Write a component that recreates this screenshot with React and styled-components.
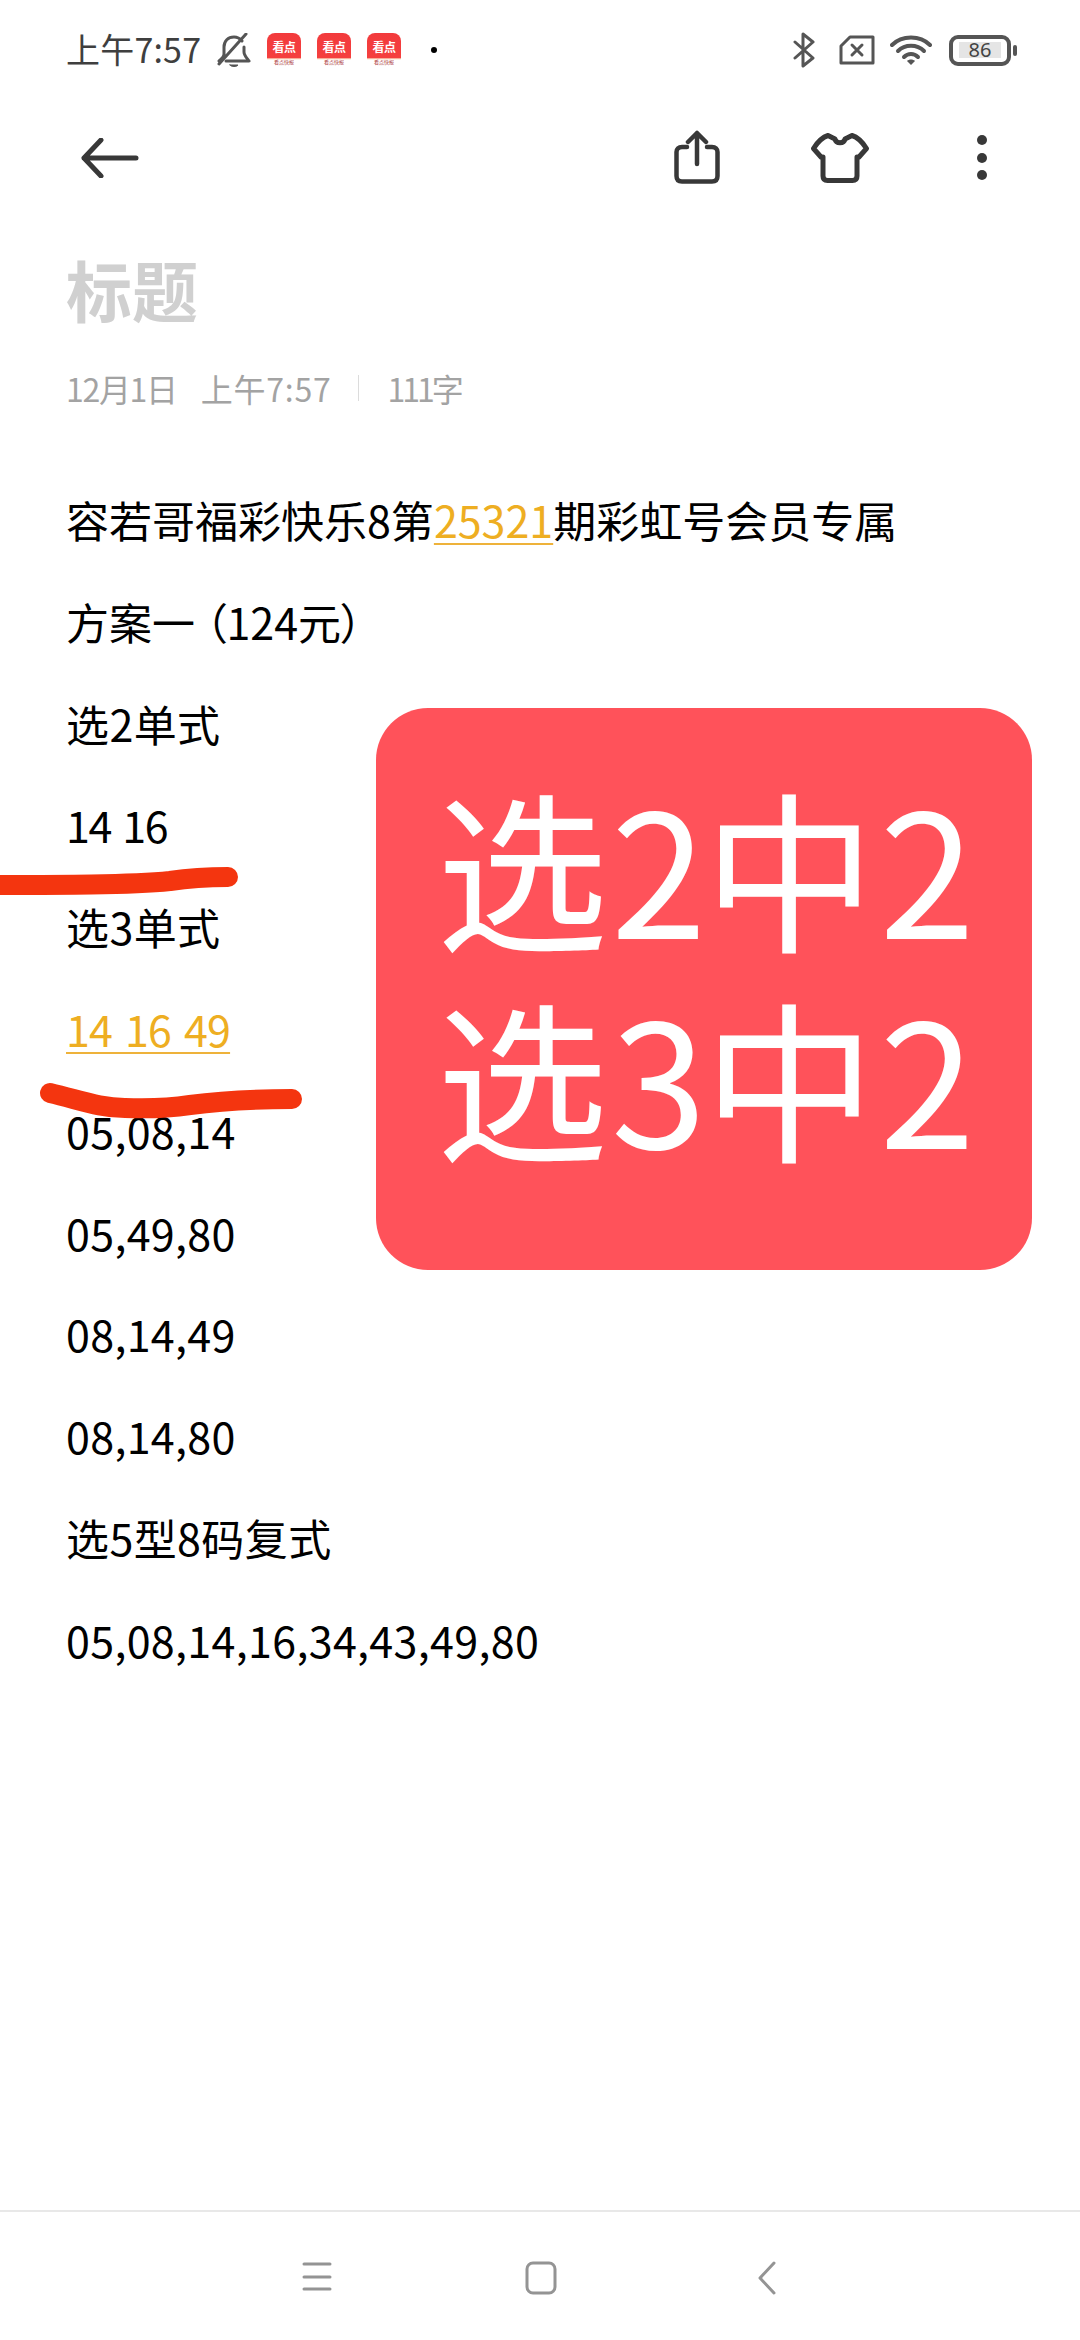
import React from "react";
import styled, { createGlobalStyle } from "styled-components";

const Global = createGlobalStyle`
  html, body { margin: 0; padding: 0; background: #fff; }
  * { box-sizing: border-box; }
`;
const FONT = `"Noto Sans CJK SC", "Noto Sans", sans-serif`;

const Page = styled.div`
  position: relative; width: 1080px; height: 2340px; overflow: hidden;
  display: flex; flex-direction: column; background: #fff; font-family: ${FONT}; color: #000;
`;
const StatusBar = styled.div`
  height: 100px; padding: 0 63px 0 66px; display: flex; align-items: center; color: #444;
`;
const Clock = styled.span`font-size: 34px; line-height: 40px; width: 151px; margin-top: -2px; letter-spacing: 0.2px; color: #3f3f3f;`;
const StatusLeft = styled.div`display: flex; align-items: center; flex: 1;`;
const StatusRight = styled.div`display: flex; align-items: center;`;
const StatusIcon = styled.div`display: flex; margin-left: ${p => p.$ml}px;`;
const AppBadge = styled.div`
  width: 34px; height: 34px; margin-left: ${p => p.$ml || 16}px; border-radius: 8px; overflow: hidden;
  display: flex; flex-direction: column; align-items: center; justify-content: flex-start;
  background: linear-gradient(#f23a3c 0, #f5403f 73%, #fbe3c8 76%, #fff 80%);
`;
const BadgeText = styled.span`font-size: 12px; line-height: 14px; margin-top: 7px; font-weight: 700; color: #fff; letter-spacing: -0.5px; white-space: nowrap;`;
const BadgeSub = styled.span`font-size: 5px; line-height: 6px; margin-top: 5px; color: #a33; white-space: nowrap;`;
const Dot = styled.i`width: 6px; height: 6px; border-radius: 50%; background: #000; margin-left: 30px;`;
const Toolbar = styled.div`
  height: 115px; padding: 0 92px 0 81px; display: flex; align-items: center; justify-content: space-between;
`;
const ToolRight = styled.div`display: flex; align-items: center;`;
const Title = styled.h1`
  margin: 28px 0 0 66px; font-size: 66px; line-height: 90px; font-weight: 700; color: #d0d0d0;
`;
const Meta = styled.div`
  margin: 33px 0 0 66px; height: 44px; display: flex; align-items: center; font-size: 32px; color: #a3a3a3; white-space: pre;
`;
const MetaText = styled.span`letter-spacing: ${p => p.$ls}px; margin-left: ${p => p.$ml || 0}px;`;
const Divider = styled.i`width: 1px; height: 26px; background: #dcdcdc; margin: 0 28px 0 27px;`;
const Body = styled.div`margin: 59px 0 0 66px; display: flex; flex-direction: column;`;
const Line = styled.div`
  font-size: 43px; line-height: 101.8px; height: 101.8px; white-space: pre;
  letter-spacing: ${p => p.$ls || 0}px; word-spacing: ${p => p.$ws || 0}px;
`;
const Mark = styled.span`color: #eeae22; text-decoration: underline; text-decoration-thickness: 2px; text-underline-offset: 5px; text-decoration-color: #eeb23a;`;
const Paren = styled.span`font-feature-settings: "palt"; margin: 0 ${p => p.$mr || 0}px 0 ${p => p.$ml || 0}px;`;
const Sticker = styled.div`
  position: absolute; left: 376px; top: 708px; width: 656px; height: 562px; border-radius: 52px;
  background: #ff525a; color: #fff; display: flex; flex-direction: column; align-items: center; justify-content: center;
  padding: 0 0 40px 3px; font-size: 172px; line-height: 210px; white-space: nowrap;
`;
const StickerDigit = styled.span`margin: 0 ${p => p.$mr || 0}px 0 ${p => p.$ml || 0}px;`;
const Scribble = styled.svg`position: absolute; left: 0; top: 0; pointer-events: none;`;
const NavBar = styled.div`
  margin-top: auto; height: 130px; border-top: 2px solid #e8e8e8; padding: 49px 0 0 302px; display: flex; align-items: flex-start;
`;
const NavSlot = styled.div`width: ${p => p.$w}px; display: flex;`;

const Bell = () => (
  <svg width="34" height="34" viewBox="0 0 34 34" fill="none" stroke="#555" strokeWidth="3" strokeLinecap="round" strokeLinejoin="round">
    <path d="M7 21V14C7 8 11 4 17 4C20 4 23 5.500 25 8M27 14V19C27 23 31 26 32 28H9" />
    <path d="M2 31L29 1M2 28C4 26 6 25 7 22" />
    <path d="M13 32H21C20 34 14 34 13 32Z" fill="#555" strokeWidth="1" />
  </svg>
);
const Bluetooth = () => (
  <svg width="22" height="36" viewBox="0 0 22 36" fill="none" stroke="#555" strokeWidth="3" strokeLinecap="round" strokeLinejoin="round">
    <path d="M2 10L20 26L10 34V2L20 10L2 26" />
  </svg>
);
const Sim = () => (
  <svg width="36" height="30" viewBox="0 0 36 30" fill="none" stroke="#555" strokeWidth="3" strokeLinejoin="round" strokeLinecap="round">
    <path d="M11 2H34V28H2V11Z" />
    <path d="M13 10L23 20M23 10L13 20" />
  </svg>
);
const Wifi = () => (
  <svg width="42" height="32" viewBox="0 0 42 32" fill="none" stroke="#555" strokeWidth="4" strokeLinecap="round">
    <path d="M2 11C12 1 30 1 40 11" />
    <path d="M8 17C15 10 27 10 34 17" />
    <path d="M14 23C18 19 24 19 28 23" />
    <path d="M21 31L17 27C19 25 23 25 25 27Z" fill="#555" stroke="none" />
  </svg>
);
const BatteryShell = styled.div`position: relative; width: 62px; height: 31px; border: 4px solid #555; border-radius: 9px; display: flex; align-items: center; justify-content: center; padding: 0 5px;`;
const BatteryFill = styled.div`width: 42px; height: 16px; background: #e5e5e5; font-size: 20px; line-height: 16px; text-align: center; color: #444; font-family: "Noto Sans", sans-serif;`;
const BatteryNub = styled.i`width: 4px; height: 11px; background: #555; border-radius: 2px; margin-left: 2px;`;
const BatteryWrap = styled.div`display: flex; align-items: center; margin-left: 17px;`;

const Back = () => (
  <svg width="58" height="40" viewBox="0 0 58 40" fill="none" stroke="#383838" strokeWidth="5" strokeLinecap="round" strokeLinejoin="round">
    <path d="M20 2L3 20L20 38M3 20H55" />
  </svg>
);
const Share = () => (
  <svg width="46" height="54" viewBox="0 0 46 54" fill="none" stroke="#383838" strokeWidth="4.500" strokeLinecap="round" strokeLinejoin="round">
    <path d="M13 17H8C4.500 17 2.500 19 2.500 22V46C2.500 49.500 4.500 51.500 8 51.500H38C41.500 51.500 43.500 49.500 43.500 46V22C43.500 19 41.500 17 38 17H33" />
    <path d="M23 34V3M14 12L23 3L32 12" />
  </svg>
);
const Shirt = () => (
  <svg width="58" height="50" viewBox="0 0 58 50" fill="none" stroke="#383838" strokeWidth="5" strokeLinecap="round" strokeLinejoin="round">
    <path d="M17 2.500L24 6C25 11 33 11 34 6L41 2.500C46 4 52 10 55.500 15.500L48 24H46V43C46 46 44.500 47.500 41.500 47.500H16.500C13.500 47.500 12 46 12 43V24H10L2.500 15.500C6 10 12 4 17 2.500Z" />
  </svg>
);
const ShareSlot = styled.div`width: 137px; display: flex; margin-top: -2px;`;
const ShirtSlot = styled.div`width: 165px; display: flex;`;
const Kebab = () => (
  <svg width="12" height="48" viewBox="0 0 12 48" fill="#383838">
    <circle cx="6" cy="6" r="5" /><circle cx="6" cy="24" r="5" /><circle cx="6" cy="41" r="5" />
  </svg>
);
const Menu = () => (
  <svg width="30" height="32" viewBox="0 0 30 32" stroke="#949494" strokeWidth="3" strokeLinecap="round">
    <path d="M2 3H28M2 16H28M2 28H28" />
  </svg>
);
const Home = () => (
  <svg width="32" height="34" viewBox="0 0 32 34" fill="none" stroke="#949494" strokeWidth="3">
    <rect x="2" y="2" width="28" height="30" rx="6" />
  </svg>
);
const Chevron = () => (
  <svg width="18" height="34" viewBox="0 0 18 34" fill="none" stroke="#949494" strokeWidth="3" strokeLinecap="round" strokeLinejoin="round">
    <path d="M16 2L2 17L16 32" />
  </svg>
);

const App = () => (
  <Page>
    <Global />
    <StatusBar>
      <StatusLeft>
        <Clock>上午7:57</Clock>
        <Bell />
        {[16, 16, 16].map((ml, i) => (
          <AppBadge key={i} $ml={ml}>
            <BadgeText>看点</BadgeText>
            <BadgeSub>看点快报</BadgeSub>
          </AppBadge>
        ))}
        <Dot />
      </StatusLeft>
      <StatusRight>
        <StatusIcon $ml={0}><Bluetooth /></StatusIcon>
        <StatusIcon $ml={24}><Sim /></StatusIcon>
        <StatusIcon $ml={15}><Wifi /></StatusIcon>
        <BatteryWrap>
          <BatteryShell><BatteryFill>86</BatteryFill></BatteryShell>
          <BatteryNub />
        </BatteryWrap>
      </StatusRight>
    </StatusBar>
    <Toolbar>
      <Back />
      <ToolRight>
        <ShareSlot><Share /></ShareSlot>
        <ShirtSlot><Shirt /></ShirtSlot>
        <Kebab />
      </ToolRight>
    </Toolbar>
    <Title>标题</Title>
    <Meta>
      <MetaText $ls={-1.3}>12月1日</MetaText>
      <MetaText $ls={0.75} $ml={24}>上午7:57</MetaText>
      <Divider />
      <MetaText $ls={-3}>111字</MetaText>
    </Meta>
    <Body>
      <Line>容若哥福彩快乐8第<Mark>25321</Mark>期彩虹号会员专属</Line>
      <Line>方案一<Paren $ml={10}>（</Paren>124元<Paren>）</Paren></Line>
      <Line $ls={0.4}>选2单式</Line>
      <Line $ls={-1.4} $ws={3}>14 16</Line>
      <Line $ls={0.4}>选3单式</Line>
      <Line $ls={-0.8} $ws={4}><Mark>14 16 49</Mark></Line>
      <Line $ls={0.33}>05,08,14</Line>
      <Line $ls={0.33}>05,49,80</Line>
      <Line $ls={0.33}>08,14,49</Line>
      <Line $ls={0.33}>08,14,80</Line>
      <Line $ls={0.4}>选5型8码复式</Line>
      <Line $ls={0.33}>05,08,14,16,34,43,49,80</Line>
    </Body>
    <Sticker>
      <div>选<StickerDigit $ml={3} $mr={-3}>2</StickerDigit>中<StickerDigit $ml={4}>2</StickerDigit></div>
      <div>选<StickerDigit $ml={3} $mr={-3}>3</StickerDigit>中<StickerDigit $ml={4}>2</StickerDigit></div>
    </Sticker>
    <Scribble width="1080" height="2340" viewBox="0 0 1080 2340" fill="none" stroke="#f4350f" strokeWidth="20" strokeLinecap="round" strokeLinejoin="round">
      <path d="M-10 885C60 885 130 885 170 881C190 878 205 877 228 877" />
      <path d="M50 1093C80 1100 100 1108 125 1108C150 1109 170 1108 190 1105C220 1101 260 1099 292 1099" />
    </Scribble>
    <NavBar>
      <NavSlot $w={223}><Menu /></NavSlot>
      <NavSlot $w={233}><Home /></NavSlot>
      <NavSlot $w={18}><Chevron /></NavSlot>
    </NavBar>
  </Page>
);

export default App;
